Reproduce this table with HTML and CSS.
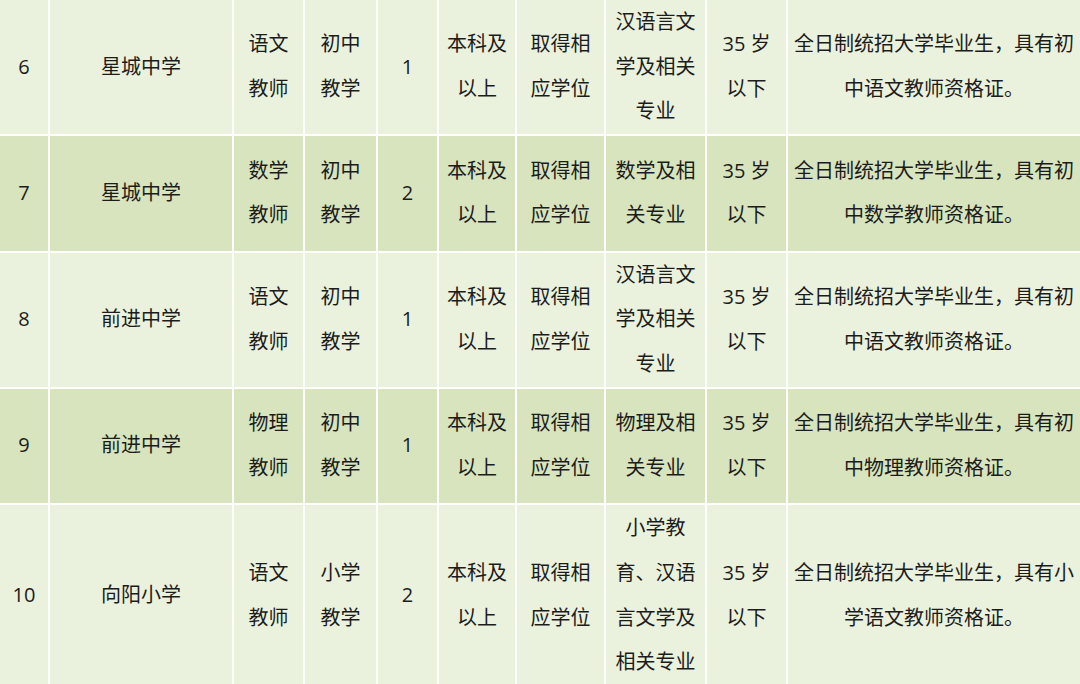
FILE: index.html
```html
<!DOCTYPE html>
<html lang="zh-CN">
<head>
<meta charset="utf-8">
<title>招聘岗位表</title>
<link rel="stylesheet" href="styles.css">
</head>
<body>
<table class="jobs">
  <colgroup>
    <col class="c-no"><col class="c-school"><col class="c-post"><col class="c-type"><col class="c-num">
    <col class="c-edu"><col class="c-degree"><col class="c-major"><col class="c-age"><col class="c-req">
  </colgroup>
  <tbody>
    <tr class="light r3">
      <td>6</td><td>星城中学</td><td>语文<br>教师</td><td>初中<br>教学</td><td>1</td>
      <td>本科及<br>以上</td><td>取得相<br>应学位</td><td>汉语言文<br>学及相关<br>专业</td><td>35 岁<br>以下</td>
      <td>全日制统招大学毕业生，具有初<br>中语文教师资格证。</td>
    </tr>
    <tr class="dark r2a">
      <td>7</td><td>星城中学</td><td>数学<br>教师</td><td>初中<br>教学</td><td>2</td>
      <td>本科及<br>以上</td><td>取得相<br>应学位</td><td>数学及相<br>关专业</td><td>35 岁<br>以下</td>
      <td>全日制统招大学毕业生，具有初<br>中数学教师资格证。</td>
    </tr>
    <tr class="light r3b">
      <td>8</td><td>前进中学</td><td>语文<br>教师</td><td>初中<br>教学</td><td>1</td>
      <td>本科及<br>以上</td><td>取得相<br>应学位</td><td>汉语言文<br>学及相关<br>专业</td><td>35 岁<br>以下</td>
      <td>全日制统招大学毕业生，具有初<br>中语文教师资格证。</td>
    </tr>
    <tr class="dark r2b">
      <td>9</td><td>前进中学</td><td>物理<br>教师</td><td>初中<br>教学</td><td>1</td>
      <td>本科及<br>以上</td><td>取得相<br>应学位</td><td>物理及相<br>关专业</td><td>35 岁<br>以下</td>
      <td>全日制统招大学毕业生，具有初<br>中物理教师资格证。</td>
    </tr>
    <tr class="light r4">
      <td>10</td><td>向阳小学</td><td>语文<br>教师</td><td>小学<br>教学</td><td>2</td>
      <td>本科及<br>以上</td><td>取得相<br>应学位</td><td>小学教<br>育、汉语<br>言文学及<br>相关专业</td><td>35 岁<br>以下</td>
      <td>全日制统招大学毕业生，具有小<br>学语文教师资格证。</td>
    </tr>
  </tbody>
</table>
</body>
</html>
```

FILE: styles.css
```css
html, body {
  margin: 0;
  padding: 0;
  background: #eaf1dd;
  overflow: hidden;
}

.jobs {
  width: 1080px;
  table-layout: fixed;
  border-collapse: collapse;
  font-family: "Open Sans", "Noto Sans CJK SC", sans-serif;
  font-size: 20px;
  font-weight: 400;
  line-height: 44.6px;
  color: #1c1c1c;
}

.c-no { width: 49px; }
.c-school { width: 184px; }
.c-post { width: 71px; }
.c-type { width: 73px; }
.c-num { width: 61px; }
.c-edu { width: 78px; }
.c-degree { width: 89px; }
.c-major { width: 101px; }
.c-age { width: 81px; }
.c-req { width: 293px; }

.jobs td {
  border: 2px solid #ffffff;
  padding: 0;
  text-align: center;
  vertical-align: middle;
  white-space: nowrap;
  overflow: hidden;
}

.jobs tr:first-child td { border-top: none; }
.jobs td:first-child { border-left: none; }
.jobs td:last-child { border-right: none; }

.light td { background: #eaf1dd; }
.dark td { background: #d7e4bd; }

.r3 { height: 134px; }
.r2a { height: 117px; }
.r3b { height: 135px; }
.r2b { height: 116px; }
.r4 { height: 184px; }
```
